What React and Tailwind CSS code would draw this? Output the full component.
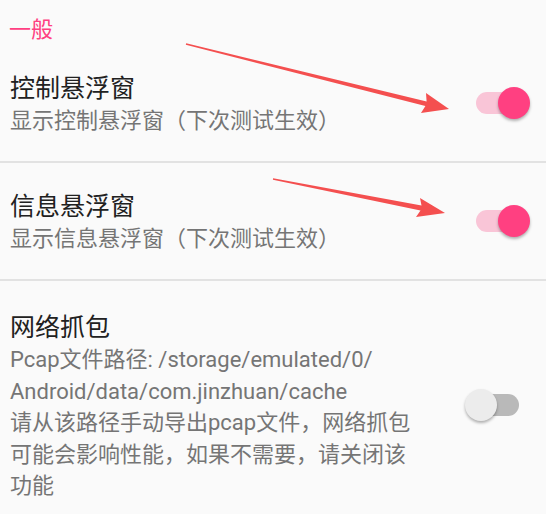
import React from 'react';

const font = { fontFamily: 'Roboto, "Noto Sans CJK SC", sans-serif' };

function Toggle({ on }) {
  return (
    <div className="relative w-[65px] h-[34px] shrink-0 flex items-center">
      <div
        className={
          'mx-[11px] w-[43px] h-[22px] rounded-full ' + (on ? 'bg-[#f9c5d7]' : 'bg-[#b9b9b9]')
        }
      />
      <div
        className={
          on
            ? 'absolute right-0 top-[1px] w-[32px] h-[32px] rounded-full bg-[#ff4081] shadow-[0_2px_3px_rgba(0,0,0,0.3)]'
            : 'absolute left-0 top-[1px] w-[32px] h-[32px] rounded-full bg-[#ececec] shadow-[0_2px_3px_rgba(0,0,0,0.3)]'
        }
      />
    </div>
  );
}

function Row({ title, children, on, last }) {
  return (
    <div
      className={
        'flex items-center pl-[10px] pr-[16px] ' +
        (last ? 'pt-[28px] pb-[20px]' : 'h-[118px] border-b-2 border-[#e2e2e2]')
      }
    >
      <div className="flex-1 min-w-0 pt-[2px]">
        <div className="text-[25px] leading-[33px] text-[#212121]">{title}</div>
        <div className="text-[22px] leading-[31.5px] text-[#757575]">{children}</div>
      </div>
      <div className="ml-[8px]">
        <Toggle on={on} />
      </div>
    </div>
  );
}

export default function App() {
  return (
    <div className="relative w-[546px] h-[514px] overflow-hidden bg-[#fafafa]" style={font}>
      <div className="pl-[9px] pt-[17px] h-[45px] text-[22px] leading-[26px] text-[#ff4081]">一般</div>

      <Row title="控制悬浮窗" on>
        显示控制悬浮窗（下次测试生效）
      </Row>
      <Row title="信息悬浮窗" on>
        显示信息悬浮窗（下次测试生效）
      </Row>
      <Row title="网络抓包" last>
        Pcap文件路径: /storage/emulated/0/
        <br />
        Android/data/com.jinzhuan/cache
        <br />
        请从该路径手动导出pcap文件，网络抓包
        <br />
        可能会影响性能，如果不需要，请关闭该
        <br />
        功能
      </Row>

      {/* red annotation arrows */}
      <svg className="absolute inset-0 pointer-events-none" width="546" height="514" viewBox="0 0 546 514">
        <polygon
          fill="#f44f4f"
          points="185.8,44.8 186.2,43.2 426.6,101.5 426,93 449,109 421,113 425.4,106.1"
        />
        <polygon
          fill="#f44f4f"
          points="272.9,179.8 273.1,178.2 421.5,205.6 420,198 445,213 416,217 420.5,210.4"
        />
      </svg>
    </div>
  );
}
